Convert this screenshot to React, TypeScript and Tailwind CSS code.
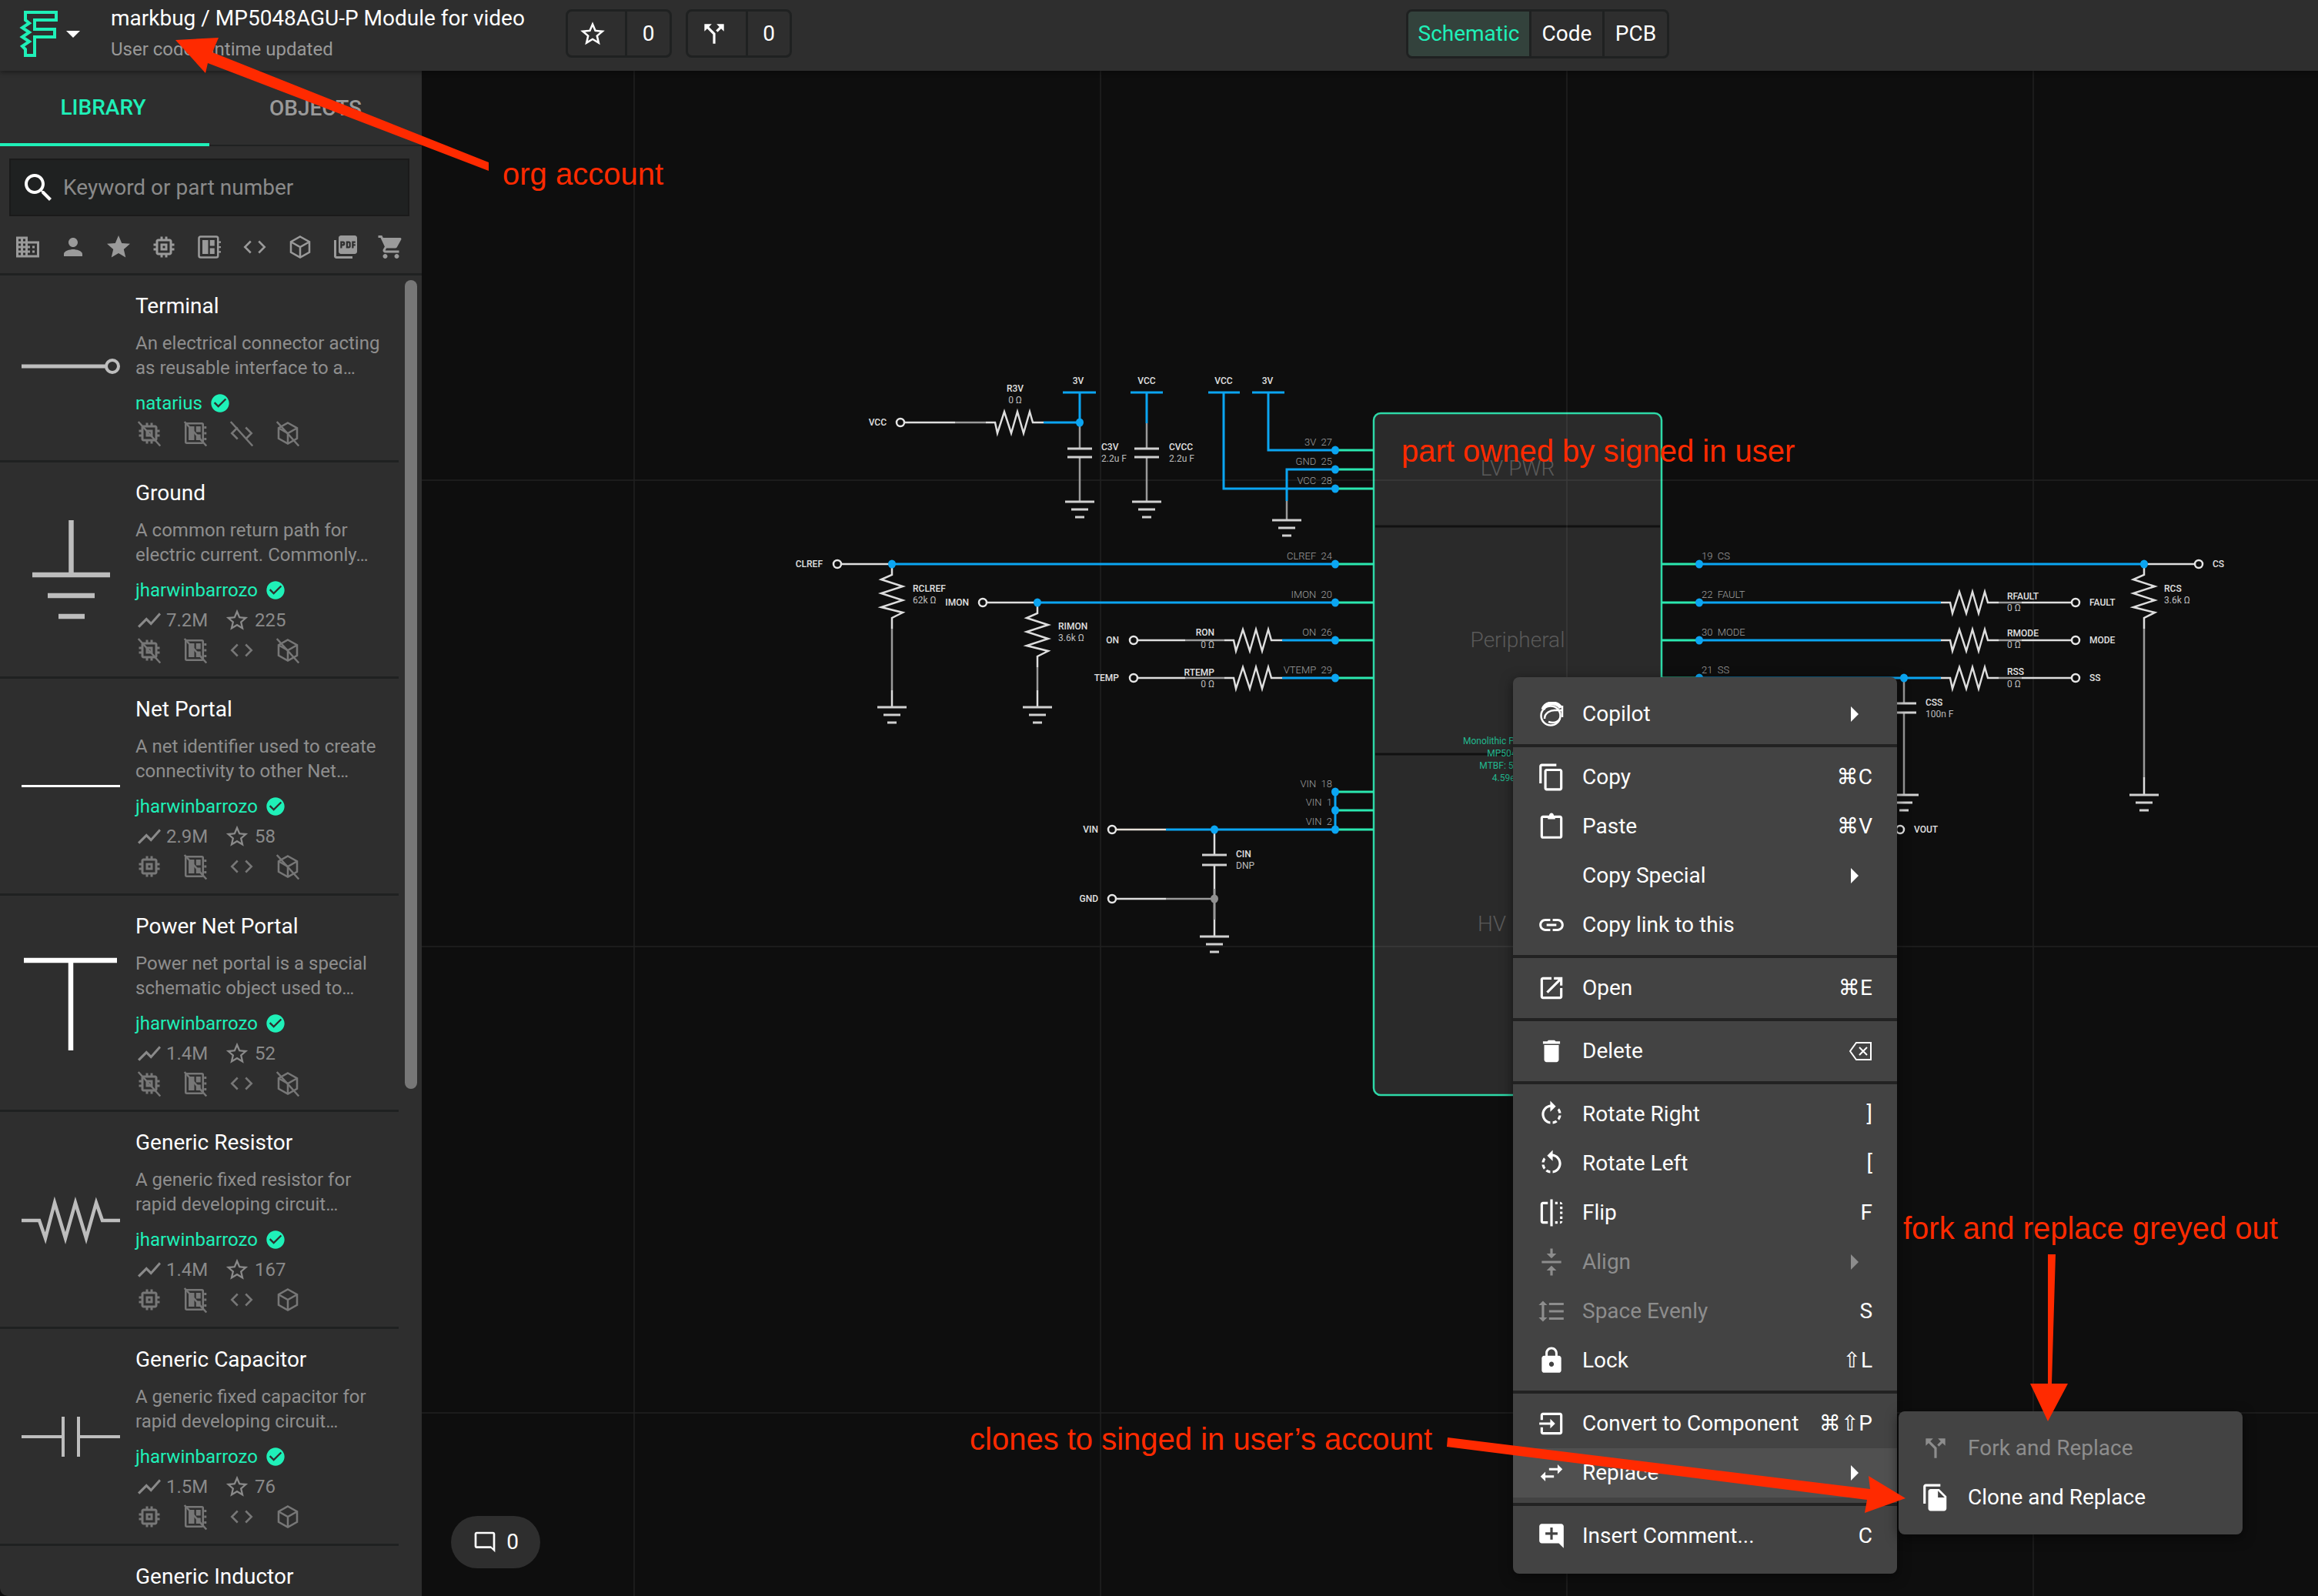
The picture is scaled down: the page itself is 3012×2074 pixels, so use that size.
import React from "react";

const P: Record<string, string> = {
  starO: "M22 9.24l-7.19-.62L12 2 9.19 8.63 2 9.24l5.46 4.73L5.82 21 12 17.27 18.18 21l-1.63-7.03L22 9.24zM12 15.4l-3.76 2.27 1-4.28-3.32-2.88 4.38-.38L12 6.1l1.71 4.04 4.38.38-3.32 2.88 1 4.28L12 15.4z",
  star: "M12 17.27L18.18 21l-1.64-7.03L22 9.24l-7.19-.61L12 2 9.19 8.63 2 9.24l5.46 4.73L5.82 21z",
  person: "M12 12c2.21 0 4-1.79 4-4s-1.79-4-4-4-4 1.79-4 4 1.79 4 4 4zm0 2c-2.67 0-8 1.34-8 4v2h16v-2c0-2.66-5.33-4-8-4z",
  search: "M15.5 14h-.79l-.28-.27C15.41 12.59 16 11.11 16 9.5 16 5.91 13.09 3 9.5 3S3 5.91 3 9.5 5.91 16 9.5 16c1.61 0 3.09-.59 4.23-1.57l.27.28v.79l5 4.99L20.49 19l-4.99-5zm-6 0C7.01 14 5 11.99 5 9.5S7.01 5 9.5 5 14 7.01 14 9.5 11.99 14 9.5 14z",
  domain: "M12 7V3H2v18h20V7H12zM6 19H4v-2h2v2zm0-4H4v-2h2v2zm0-4H4V9h2v2zm0-4H4V5h2v2zm4 12H8v-2h2v2zm0-4H8v-2h2v2zm0-4H8V9h2v2zm0-4H8V5h2v2zm10 12h-8v-2h2v-2h-2v-2h2v-2h-2V9h8v10zm-2-8h-2v2h2v-2zm0 4h-2v2h2v-2z",
  memory: "M15 9H9v6h6V9zm-2 4h-2v-2h2v2zm8-2V9h-2V7c0-1.1-.9-2-2-2h-2V3h-2v2h-2V3H9v2H7c-1.1 0-2 .9-2 2v2H3v2h2v2H3v2h2v2c0 1.1.9 2 2 2h2v2h2v-2h2v2h2v-2h2c1.1 0 2-.9 2-2v-2h2v-2h-2v-2h2zm-4 6H7V7h10v10z",
  pdf: "M20 2H8c-1.1 0-2 .9-2 2v12c0 1.1.9 2 2 2h12c1.1 0 2-.9 2-2V4c0-1.1-.9-2-2-2zm-8.5 7.5c0 .83-.67 1.5-1.5 1.5H9v2H7.5V7H10c.83 0 1.5.67 1.5 1.5v1zm5 2c0 .83-.67 1.5-1.5 1.5h-2.5V7H15c.83 0 1.5.67 1.5 1.5v3zm4-3H19v1h1.5V11H19v2h-1.5V7h3v1.5zM9 9.5h1v-1H9v1zM4 6H2v14c0 1.1.9 2 2 2h14v-2H4V6zm10 5.5h1v-3h-1v3z",
  cart: "M7 18c-1.1 0-1.99.9-1.99 2S5.9 22 7 22s2-.9 2-2-.9-2-2-2zM1 2v2h2l3.6 7.59-1.35 2.45c-.16.28-.25.61-.25.96 0 1.1.9 2 2 2h12v-2H7.42c-.14 0-.25-.11-.25-.25l.03-.12.9-1.63h7.45c.75 0 1.41-.41 1.75-1.03l3.58-6.49c.08-.14.12-.31.12-.48 0-.55-.45-1-1-1H5.21l-.94-2H1zm16 16c-1.1 0-1.99.9-1.99 2s.89 2 1.99 2 2-.9 2-2-.9-2-2-2z",
  fileCopy: "M16 1H4c-1.1 0-2 .9-2 2v14h2V3h12V1zm-1 4l6 6v10c0 1.1-.9 2-2 2H7.99C6.89 23 6 22.1 6 21l.01-14c0-1.1.89-2 1.99-2h7zm-1 7h5.5L14 6.5V12z",
  del: "M6 19c0 1.1.9 2 2 2h8c1.1 0 2-.9 2-2V7H6v12zM19 4h-3.5l-1-1h-5l-1 1H5v2h14V4z",
  lock: "M18 8h-1V6c0-2.76-2.24-5-5-5S7 3.24 7 6v2H6c-1.1 0-2 .9-2 2v10c0 1.1.9 2 2 2h12c1.1 0 2-.9 2-2V10c0-1.1-.9-2-2-2zm-6 9c-1.1 0-2-.9-2-2s.9-2 2-2 2 .9 2 2-.9 2-2 2zm3.1-9H8.9V6c0-1.71 1.39-3.1 3.1-3.1 1.71 0 3.1 1.39 3.1 3.1v2z",
  copy: "M16 1H4c-1.1 0-2 .9-2 2v14h2V3h12V1zm3 4H8c-1.1 0-2 .9-2 2v14c0 1.1.9 2 2 2h11c1.1 0 2-.9 2-2V7c0-1.1-.9-2-2-2zm0 16H8V7h11v14z",
  paste: "M5 3h5c.2-1 .9-2 2-2s1.8 1 2 2h5c1.1 0 2 .9 2 2v15c0 1.1-.9 2-2 2H5c-1.1 0-2-.9-2-2V5c0-1.1.9-2 2-2zm0 2v15h14V5h-4v1H9V5H5z",
  link: "M3.9 12c0-1.71 1.39-3.1 3.1-3.1h4V7H7c-2.76 0-5 2.24-5 5s2.24 5 5 5h4v-1.9H7c-1.71 0-3.1-1.39-3.1-3.1zM8 13h8v-2H8v2zm9-6h-4v1.9h4c1.71 0 3.1 1.39 3.1 3.1s-1.39 3.1-3.1 3.1h-4V17h4c2.76 0 5-2.24 5-5s-2.24-5-5-5z",
  open: "M19 19H5V5h7V3H5c-1.11 0-2 .9-2 2v14c0 1.1.89 2 2 2h14c1.1 0 2-.9 2-2v-7h-2v7zM14 3v2h3.59l-9.83 9.83 1.41 1.41L19 6.41V10h2V3h-7z",
  rotR: "M15.55 5.55L11 1v3.07C7.06 4.56 4 7.92 4 12s3.05 7.44 7 7.93v-2.02c-2.84-.48-5-2.94-5-5.91s2.16-5.43 5-5.91V10l4.55-4.45zM19.93 11c-.17-1.39-.72-2.73-1.62-3.89l-1.42 1.42c.54.75.88 1.6 1.02 2.47h2.02zM13 17.9v2.02c1.39-.17 2.74-.71 3.9-1.61l-1.44-1.44c-.75.54-1.59.89-2.46 1.03zm3.89-2.42l1.42 1.41c.9-1.16 1.45-2.5 1.62-3.89h-2.02c-.14.87-.48 1.72-1.02 2.48z",
  rotL: "M7.11 8.53L5.7 7.11C4.8 8.27 4.24 9.61 4.07 11h2.02c.14-.87.49-1.72 1.02-2.47zM6.09 13H4.07c.17 1.39.72 2.73 1.62 3.89l1.41-1.42c-.52-.75-.87-1.59-1.01-2.47zm1.01 5.32c1.16.9 2.51 1.44 3.9 1.61V17.9c-.87-.15-1.71-.49-2.46-1.03L7.1 18.32zM13 4.07V1L8.45 5.55 13 10V6.09c2.84.48 5 2.94 5 5.91s-2.16 5.43-5 5.91v2.02c3.95-.49 7-3.85 7-7.93s-3.05-7.44-7-7.93z",
  flip: "M15 21h2v-2h-2v2zm4-12h2V7h-2v2zM3 5v14c0 1.1.9 2 2 2h4v-2H5V5h4V3H5c-1.1 0-2 .9-2 2zm16-2v2h2c0-1.1-.9-2-2-2zm-8 20h2V1h-2v22zm8-6h2v-2h-2v2zM15 5h2V3h-2v2zm4 8h2v-2h-2v2zm0 8c1.1 0 2-.9 2-2h-2v2z",
  align: "M8 19h3v4h2v-4h3l-4-4-4 4zm8-14h-3V1h-2v4H8l4 4 4-4zM4 11v2h16v-2H4z",
  space: "M6 7h2.5L5 3.5 1.5 7H4v10H1.5L5 20.5 8.5 17H6V7zm4-2v2h12V5H10zm0 14h12v-2H10v2zm0-6h12v-2H10v2z",
  swap: "M6.99 11L3 15l3.99 4v-3H14v-2H6.99v-3zM21 9l-3.99-4v3H10v2h7.01v3L21 9z",
  comment: "M22 4c0-1.1-.9-2-2-2H4c-1.1 0-2 .9-2 2v12c0 1.1.9 2 2 2h14l4 4V4zm-5 7h-4v4h-2v-4H7V9h4V5h2v4h4v2z",
  input: "M19 3H5c-1.1 0-2 .9-2 2v4h2V5h14v14H5v-4H3v4c0 1.1.9 2 2 2h14c1.1 0 2-.9 2-2V5c0-1.1-.9-2-2-2zM11 16l4-4-4-4v3H2v2h9v3z",
  fork: "M14 4l2.29 2.29-2.88 2.88 1.42 1.42 2.88-2.88L20 10V4zm-4 0H4v6l2.29-2.29 4.71 4.7V20h2v-8.41l-5.29-5.3z",
  bubble: "M4 2h16c1.1 0 2 .9 2 2v18l-4-4H4c-1.1 0-2-.9-2-2V4c0-1.1.9-2 2-2zm0 14h14l2 2V4H4v12z",
  check: "M12 2C6.48 2 2 6.48 2 12s4.48 10 10 10 10-4.48 10-10S17.52 2 12 2zm-2 15l-5-5 1.41-1.41L10 14.17l7.59-7.59L19 8l-9 9z",
  trend: "M3.5 18.49l6-6.01 4 4L22 6.92l-1.41-1.41-7.09 7.97-4-4L2 16.99z",
};

function Ic({ n, c = "w-[38px] h-[38px]" }: { n: string; c?: string }) {
  return (
    <svg viewBox="0 0 24 24" fill="currentColor" className={c + " shrink-0"}>
      <path d={P[n]} />
    </svg>
  );
}

function Glyph({ kind, off }: { kind: string; off?: boolean }) {
  return (
    <svg viewBox="0 0 24 24" fill="none" stroke="currentColor" strokeWidth="1.7" className="w-9 h-9 shrink-0">
      {kind === "chip" && <path fill="currentColor" stroke="none" d={P.memory} />}
      {kind === "pcb" && (
        <>
          <rect x="3.5" y="3.5" width="15" height="17" rx="1" />
          <path fill="currentColor" stroke="none" d="M6 6h5v12H6zM12.500 6h4v5h-4zM12.500 13h4v5h-4zM19.500 6h2v2h-2zM19.500 11h2v2h-2zM19.500 16h2v2h-2z" />
        </>
      )}
      {kind === "code" && <path d="M8.500 7 3.500 12 8.500 17M15.500 7 20.500 12 15.500 17" />}
      {kind === "cube" && <path d="M12 3 20 7.500V16.500L12 21 4 16.500V7.500ZM4 7.500 12 12 20 7.500M12 12V21" />}
      {off && <path d="M2.500 2 21.500 23" />}
    </svg>
  );
}

const rows = [
  { t: "Terminal", d: ["An electrical connector acting", "as reusable interface to a…"], a: "natarius", g: [1, 1, 1, 1] },
  { t: "Ground", d: ["A common return path for", "electric current. Commonly…"], a: "jharwinbarrozo", s: ["7.2M", "225"], g: [1, 1, 0, 1] },
  { t: "Net Portal", d: ["A net identifier used to create", "connectivity to other Net…"], a: "jharwinbarrozo", s: ["2.9M", "58"], g: [0, 1, 0, 1] },
  { t: "Power Net Portal", d: ["Power net portal is a special", "schematic object used to…"], a: "jharwinbarrozo", s: ["1.4M", "52"], g: [1, 1, 0, 1] },
  { t: "Generic Resistor", d: ["A generic fixed resistor for", "rapid developing circuit…"], a: "jharwinbarrozo", s: ["1.4M", "167"], g: [0, 1, 0, 0] },
  { t: "Generic Capacitor", d: ["A generic fixed capacitor for", "rapid developing circuit…"], a: "jharwinbarrozo", s: ["1.5M", "76"], g: [0, 1, 0, 0] },
];

function Sym({ name }: { name: string }) {
  return (
    <svg viewBox="0 0 176 220" className="w-[176px] h-[220px] shrink-0 overflow-visible" fill="none">
      {name === "Terminal" && (
        <>
          <path d="M28 118H137" stroke="#bdbdbd" strokeWidth="5" />
          <circle cx="146" cy="118" r="8" stroke="#bdbdbd" strokeWidth="4" />
        </>
      )}
      {name === "Ground" && (
        <path d="M92.500 75V146M42 146H143M62 173H123M76 200H110" stroke="#bdbdbd" strokeWidth="6.500" />
      )}
      {name === "Net Portal" && <path d="M28 139.500H156" stroke="#fff" strokeWidth="3" />}
      {name === "Power Net Portal" && <path d="M31 84H152M92 84V201" stroke="#fff" strokeWidth="6.500" />}
      {name === "Generic Resistor" && (
        <path d="M28 141H51L59 164 71 118 85 164 98 118 112 164 125 118 133 141H156" stroke="#bdbdbd" strokeWidth="4.500" />
      )}
      {name === "Generic Capacitor" && (
        <path d="M28 140H82M102 140H156M82 114V166M102 114V166" stroke="#bdbdbd" strokeWidth="4" />
      )}
    </svg>
  );
}

function Row({ r }: { r: (typeof rows)[number] }) {
  return (
    <div className="flex mr-[30px] border-b-[3px] border-[#1f2121] pb-[18.6px]">
      <Sym name={r.t} />
      <div className="flex-1 min-w-0 pt-[22px]">
        <div className="h-9 leading-9 text-[28px] text-white whitespace-nowrap">{r.t}</div>
        <div className="mt-[14px] text-2xl leading-8 text-[#8e8e8e] whitespace-nowrap">
          <div>{r.d[0]}</div>
          <div>{r.d[1]}</div>
        </div>
        <div className="mt-[14px] h-8 flex items-center gap-[9px] text-2xl text-[#1ff0b8]">
          <span>{r.a}</span>
          <Ic n="check" c="w-7 h-7" />
        </div>
        {r.s && (
          <div className="mt-[7px] h-8 flex items-center text-2xl text-[#8a8a8a]">
            <Ic n="trend" c="w-9 h-9" />
            <span className="ml-1 w-[75px]">{r.s[0]}</span>
            <Ic n="starO" c="w-[34px] h-[34px]" />
            <span className="ml-[6px]">{r.s[1]}</span>
          </div>
        )}
        <div className="mt-[7px] h-8 flex items-center gap-6 text-[#777777]">
          <Glyph kind="chip" off={!!r.g[0]} />
          <Glyph kind="pcb" off={!!r.g[1]} />
          <Glyph kind="code" off={!!r.g[2]} />
          <Glyph kind="cube" off={!!r.g[3]} />
        </div>
      </div>
    </div>
  );
}

function Sidebar() {
  return (
    <aside className="relative w-[548px] shrink-0 h-full bg-[#2e2e2e] rounded-bl-[10px] overflow-hidden flex flex-col">
      <div className="flex h-[98px] shrink-0 border-b-2 border-[#1f2121] text-[28px] font-medium">
        <div className="w-[272px] h-[98px] pt-[2px] pr-[4px] border-b-4 border-[#1ff0b8] text-[#1ff0b8] flex items-center justify-center">LIBRARY</div>
        <div className="w-[276px] pt-[2px] flex items-center justify-center text-[#9a9a9a]">OBJECTS</div>
      </div>
      <div className="ml-3 w-[520px] mt-4 h-[75px] shrink-0 bg-[#1f2121] border-2 border-[#1a1a1a] flex items-center pl-3 gap-2 text-[28px] text-[#8a8a8a]">
        <Ic n="search" c="w-12 h-12 text-white" />
        <span>Keyword or part number</span>
      </div>
      <div className="h-[77px] pt-[5px] shrink-0 border-b-[3px] border-[#1f2121] flex items-center pl-[18px] gap-[23px] text-[#9a9a9a]">
        <Ic n="domain" c="w-9 h-9" />
        <Ic n="person" c="w-9 h-9" />
        <Ic n="star" c="w-9 h-9" />
        <Ic n="memory" c="w-9 h-9" />
        <svg viewBox="0 0 24 24" fill="none" stroke="currentColor" strokeWidth="1.7" className="w-9 h-9 shrink-0">
          <rect x="3" y="3" width="16.500" height="18" rx="1.500" />
          <path fill="currentColor" stroke="none" d="M6 6h5v12H6zM12.500 6h4v5h-4zM12.500 13h4v5h-4zM20 7h2v1.500h-2zM20 11.250h2v1.500h-2zM20 15.500h2v1.500h-2z" />
        </svg>
        <svg viewBox="0 0 24 24" fill="none" stroke="currentColor" strokeWidth="1.700" className="w-9 h-9 shrink-0"><path d="M8.500 7 3.500 12 8.500 17M15.500 7 20.500 12 15.500 17" /></svg>
        <svg viewBox="0 0 24 24" fill="none" stroke="currentColor" strokeWidth="1.700" className="w-9 h-9 shrink-0"><path d="M12 3 20 7.500V16.500L12 21 4 16.500V7.500ZM4 7.500 12 12 20 7.500M12 12V21" /></svg>
        <Ic n="pdf" c="w-9 h-9" />
        <Ic n="cart" c="w-9 h-9" />
      </div>
      <div className="flex-1 min-h-0 overflow-hidden">
        {rows.map((r) => (
          <Row key={r.t} r={r} />
        ))}
        <div className="pl-[176px] pt-[22px] leading-9 text-[28px] text-white">Generic Inductor</div>
      </div>
      <div className="absolute left-[526px] top-[272px] w-4 h-[1051px] rounded-full bg-[#777777]" />
    </aside>
  );
}

const B = "#0ba5f2", G = "#9a9a9a", W = "#dedede", T = "#2be8b0";

const L = ({ d, c = W, w = 2.5 }: { d: string; c?: string; w?: number }) => (
  <path d={d} stroke={c} strokeWidth={w} fill="none" />
);
const Dot = ({ x, y, c = B }: { x: number; y: number; c?: string }) => <ellipse cx={x} cy={y} rx="5" ry="5.5" fill={c} />;
const Term = ({ x, y }: { x: number; y: number }) => <circle cx={x} cy={y} r="5" fill="none" stroke="#e6e6e6" strokeWidth="2.5" />;
const Gnd = ({ x, y }: { x: number; y: number }) => (
  <L d={`M${x - 19} ${y}H${x + 19}M${x - 11} ${y + 10}H${x + 11}M${x - 6} ${y + 20}H${x + 6}`} c="#d0d0d0" w={3} />
);
const Res = ({ x, y }: { x: number; y: number }) => (
  <L d={`M${x} ${y}h12l3 14 9-28 9 28 8-28 8 28 8-28 4 14h14`} />
);
const RV = ({ x, y }: { x: number; y: number }) => (
  <L d={`M${x} ${y}v14l-14 6 28 9-28 9 28 9-28 9 28 7-14 7v14`} />
);
const Cap = ({ x, y, n = 16 }: { x: number; y: number; n?: number }) => (
  <L d={`M${x - n} ${y}H${x + n}M${x - n} ${y + 11}H${x + n}`} c="#d0d0d0" w={3} />
);
const Txt = ({ x, y, s, k = "v", a = "start" }: { x: number; y: number; s: string; k?: "n" | "v" | "p"; a?: "start" | "end" | "middle" }) => (
  <text
    x={x}
    y={y}
    textAnchor={a}
    dominantBaseline="central"
    fontSize={k === "p" ? 13 : 12}
    fontWeight={k === "n" ? 500 : k === "p" ? 300 : 400}
    fill={k === "n" ? "#e0e0e0" : k === "p" ? "#a0a0a0" : "#bdbdbd"}
    style={{ whiteSpace: "pre" }}
  >
    {s}
  </text>
);

function Schematic() {
  const pins: [number, string][] = [
    [585, "3V  27"], [610, "GND  25"], [635, "VCC  28"], [733, "CLREF  24"], [783, "IMON  20"], [832, "ON  26"], [881, "VTEMP  29"], [1029, "VIN  18"], [1053, "VIN  1"], [1078, "VIN  2"],
  ];
  const rpins: [number, string][] = [[733, "19  CS"], [783, "22  FAULT"], [832, "30  MODE"], [881, "21  SS"]];
  return (
    <svg viewBox="548 92 2464 1982" className="absolute inset-0 w-full h-full">
      <rect x="1785" y="537" width="374" height="886" rx="9" fill="#2a2a2a" stroke="#2ed9a8" strokeWidth="2.5" />
      <L d="M1787 684H2157M1787 980H2157" c="#111" w={3} />
      <g stroke="rgba(255,255,255,0.08)" strokeWidth="1.5">
        <path d="M824 92V2074M1430 92V2074M2036 92V2074M2642 92V2074M548 624H3012M548 1230H3012M548 1836H3012" />
      </g>
      <g fontSize="28" fill="#5a5a5a" textAnchor="middle" fontWeight="300">
        <text x="1972" y="608" dominantBaseline="central">LV PWR</text>
        <text x="1972" y="831" dominantBaseline="central">Peripheral</text>
        <text x="1972" y="1200" dominantBaseline="central">HV PWR</text>
      </g>
      <g fontSize="12" fill="#22b98f" textAnchor="middle">
        <text x="1972" y="947" dominantBaseline="central">IC</text>
        <text x="1972" y="963" dominantBaseline="central">Monolithic Power Systems</text>
        <text x="1972" y="979" dominantBaseline="central">MP5048AGU-P</text>
        <text x="1972" y="995" dominantBaseline="central">MTBF: 57.16 years</text>
        <text x="1972" y="1011" dominantBaseline="central">4.59e-07 FIT</text>
      </g>

      {pins.map(([y, s]) => (
        <g key={s}>
          <L d={`M1735 ${y}H1785`} c={T} w={3} />
          <Txt x={1731} y={y - 11} s={s} k="p" a="end" />
        </g>
      ))}
      {rpins.map(([y, s]) => (
        <g key={s}>
          <L d={`M2159 ${y}H2208`} c={T} w={3} />
          <Txt x={2211} y={y - 11} s={s} k="p" />
        </g>
      ))}

      {/* top left */}
      <Term x={1170} y={549} />
      <L d="M1175 549H1241" /><L d="M1241 549H1281" c={G} />
      <Res x={1281} y={549} />
      <L d="M1356 549H1403" c={B} w={3} />
      <L d="M1381 510H1424M1403 510V549" c={B} w={3} />
      <L d="M1403 549V583M1403 594V652" c={G} />
      <Dot x={1403} y={549} />
      <Cap x={1403} y={583} /><Gnd x={1403} y={652} />
      <Txt x={1152} y={549} s="VCC" k="n" a="end" />
      <Txt x={1401} y={495} s="3V" k="n" a="middle" />
      <Txt x={1319} y={505} s="R3V" k="n" a="middle" />
      <Txt x={1319} y={520} s="0 Ω" a="middle" />
      <Txt x={1431} y={581} s="C3V" k="n" />
      <Txt x={1431} y={596} s="2.2u F" />

      <L d="M1469 510H1511M1490 510V550" c={B} w={3} />
      <L d="M1490 550V583M1490 594V652" c={G} />
      <Cap x={1490} y={583} /><Gnd x={1490} y={652} />
      <Txt x={1490} y={495} s="VCC" k="n" a="middle" />
      <Txt x={1519} y={581} s="CVCC" k="n" />
      <Txt x={1519} y={596} s="2.2u F" />

      <L d="M1570 510H1611M1590 510V635H1735" c={B} w={3} />
      <L d="M1627 510H1669M1648 510V585H1735" c={B} w={3} />
      <L d="M1735 610H1672V651" c={B} w={3} />
      <L d="M1672 651V676" c={G} />
      <Gnd x={1672} y={676} />
      <Txt x={1590} y={495} s="VCC" k="n" a="middle" />
      <Txt x={1647} y={495} s="3V" k="n" a="middle" />
      <Dot x={1735} y={585} /><Dot x={1735} y={610} /><Dot x={1735} y={635} />

      {/* CLREF */}
      <Term x={1088} y={733} />
      <L d="M1093 733H1159" />
      <L d="M1159 733H1735" c={B} w={3} />
      <RV x={1159} y={733} />
      <L d="M1159 817V897" c={G} /><L d="M1159 897V919" />
      <Gnd x={1159} y={919} />
      <Dot x={1159} y={733} /><Dot x={1735} y={733} />
      <Txt x={1069} y={733} s="CLREF" k="n" a="end" />
      <Txt x={1186} y={765} s="RCLREF" k="n" />
      <Txt x={1186} y={780} s="62k Ω" />

      {/* IMON */}
      <Term x={1277} y={783} />
      <L d="M1282 783H1348" />
      <L d="M1348 783H1735" c={B} w={3} />
      <RV x={1348} y={783} />
      <L d="M1348 867V897" c={G} /><L d="M1348 897V919" />
      <Gnd x={1348} y={919} />
      <Dot x={1348} y={783} /><Dot x={1735} y={783} />
      <Txt x={1259} y={783} s="IMON" k="n" a="end" />
      <Txt x={1375} y={814} s="RIMON" k="n" />
      <Txt x={1375} y={829} s="3.6k Ω" />

      {/* ON / TEMP */}
      {[[832, "ON", "RON", 822, 838], [881, "TEMP", "RTEMP", 874, 889]].map(([y, a, b, y1, y2]) => (
        <g key={a as string}>
          <Term x={1473} y={y as number} />
          <L d={`M1478 ${y}H1540`} /><L d={`M1540 ${y}H1591`} c={G} />
          <Res x={1591} y={y as number} />
          <L d={`M1666 ${y}H1735`} c={B} w={3} />
          <Dot x={1735} y={y as number} />
          <Txt x={1454} y={y as number} s={a as string} k="n" a="end" />
          <Txt x={1578} y={y1 as number} s={b as string} k="n" a="end" />
          <Txt x={1578} y={y2 as number} s="0 Ω" a="end" />
        </g>
      ))}

      {/* VIN */}
      <Term x={1445} y={1078} />
      <L d="M1450 1078H1515" c="#e6e0d8" />
      <L d="M1515 1078H1735M1735 1029V1078" c={B} w={3} />
      <L d="M1578 1078V1111M1578 1124V1217" />
      <L d="M1578 1155V1195" c={G} />
      <L d="M1562 1111H1594M1562 1124H1594" c="#d0d0d0" w={3} />
      <Gnd x={1578} y={1217} />
      <Term x={1445} y={1168} />
      <L d="M1450 1168H1515" /><L d="M1515 1168H1578" c={G} />
      <Dot x={1578} y={1078} /><Dot x={1578} y={1168} c="#8f8f8f" />
      <Dot x={1735} y={1029} /><Dot x={1735} y={1053} /><Dot x={1735} y={1078} />
      <Txt x={1427} y={1078} s="VIN" k="n" a="end" />
      <Txt x={1427} y={1168} s="GND" k="n" a="end" />
      <Txt x={1606} y={1110} s="CIN" k="n" />
      <Txt x={1606} y={1125} s="DNP" />

      {/* right side */}
      <L d="M2208 733H2786" c={B} w={3} />
      <L d="M2786 733H2852" />
      <Term x={2857} y={733} />
      <RV x={2786} y={733} />
      <L d="M2786 817V1010" c={G} /><L d="M2786 1010V1033" />
      <Gnd x={2786} y={1033} />
      <Dot x={2208} y={733} /><Dot x={2786} y={733} />
      <Txt x={2875} y={733} s="CS" k="n" />
      <Txt x={2812} y={765} s="RCS" k="n" />
      <Txt x={2812} y={780} s="3.6k Ω" />
      {[[783, "FAULT", "RFAULT", 775, 790], [832, "MODE", "RMODE", 823, 838], [881, "SS", "RSS", 873, 889]].map(([y, a, b, y1, y2]) => (
        <g key={a as string}>
          <L d={`M2208 ${y}H2522`} c={B} w={3} />
          <Res x={2522} y={y as number} />
          <L d={`M2597 ${y}H2627`} c={G} />
          <L d={`M2627 ${y}H2692`} />
          <Term x={2697} y={y as number} />
          <Dot x={2208} y={y as number} />
          <Txt x={2715} y={y as number} s={a as string} k="n" />
          <Txt x={2608} y={y1 as number} s={b as string} k="n" />
          <Txt x={2608} y={y2 as number} s="0 Ω" />
        </g>
      ))}
      <L d="M2474 881V914M2474 926V1033" c={G} />
      <L d="M2458 914H2490M2458 926H2490" c="#d0d0d0" w={3} />
      <Gnd x={2474} y={1033} />
      <Dot x={2474} y={881} />
      <Txt x={2502} y={913} s="CSS" k="n" />
      <Txt x={2502} y={928} s="100n F" />
      <Term x={2469} y={1078} />
      <Txt x={2487} y={1078} s="VOUT" k="n" />
    </svg>
  );
}

function Caret() {
  return (
    <svg viewBox="0 0 10 20" className="w-[10px] h-5 mr-[18px]" fill="currentColor">
      <path d="M0 0 10 10 0 20Z" />
    </svg>
  );
}

function CopilotIcon() {
  return (
    <svg viewBox="0 0 36 32" className="w-9 h-8 shrink-0" fill="none" stroke="currentColor" strokeWidth="2.5">
      <path d="M7 10C9 4 14 2 19 2c5 0 9 2 11 6" strokeWidth="5" />
      <circle cx="17" cy="18" r="12.500" />
      <path d="M9 22c0-8 8-11 13-11h10M32 5v15M14 26c6 2 12 1 15-4" />
    </svg>
  );
}

function BackspaceIcon() {
  return (
    <svg viewBox="0 0 30 26" className="w-[30px] h-[26px]" fill="none" stroke="currentColor" strokeWidth="2">
      <path d="M9 2H28V24H9L1 13ZM13 8 23 18M23 8 13 18" />
    </svg>
  );
}

type Item = { n?: string; l: string; k?: string; arrow?: boolean; dis?: boolean; hot?: boolean; custom?: React.ReactNode; kNode?: React.ReactNode };

function MenuItem({ it }: { it: Item }) {
  return (
    <div className={"h-16 flex items-center pl-[34px] pr-8 " + (it.hot ? "bg-[#505050] " : "") + (it.dis ? "text-[#8d8d8d]" : "text-white")}>
      <div className="w-8 h-8 flex items-center justify-center shrink-0">{it.custom ?? (it.n ? <Ic n={it.n} /> : null)}</div>
      <div className="ml-6 flex-1 whitespace-nowrap">{it.l}</div>
      {it.k && <div className="text-white whitespace-nowrap font-[family-name:Roboto,'DejaVu_Sans',sans-serif]">{it.k}</div>}
      {it.kNode}
      {it.arrow && <Caret />}
    </div>
  );
}

const Sep = () => <div className="h-1 my-[7px] bg-[#222222]" />;

function Menu() {
  return (
    <div className="absolute left-[1966px] top-[880px] w-[499px] h-[1165px] pt-4 bg-[#434343] rounded-lg text-[28px] shadow-[0_4px_16px_rgba(0,0,0,0.5)]">
      <MenuItem it={{ custom: <CopilotIcon />, l: "Copilot", arrow: true }} />
      <Sep />
      <MenuItem it={{ n: "copy", l: "Copy", k: "⌘C" }} />
      <MenuItem it={{ n: "paste", l: "Paste", k: "⌘V" }} />
      <MenuItem it={{ l: "Copy Special", arrow: true }} />
      <MenuItem it={{ n: "link", l: "Copy link to this" }} />
      <Sep />
      <MenuItem it={{ n: "open", l: "Open", k: "⌘E" }} />
      <Sep />
      <MenuItem it={{ n: "del", l: "Delete", kNode: <BackspaceIcon /> }} />
      <Sep />
      <MenuItem it={{ n: "rotR", l: "Rotate Right", k: "]" }} />
      <MenuItem it={{ n: "rotL", l: "Rotate Left", k: "[" }} />
      <MenuItem it={{ n: "flip", l: "Flip", k: "F" }} />
      <MenuItem it={{ n: "align", l: "Align", arrow: true, dis: true }} />
      <MenuItem it={{ n: "space", l: "Space Evenly", k: "S", dis: true }} />
      <MenuItem it={{ n: "lock", l: "Lock", k: "⇧L" }} />
      <Sep />
      <MenuItem it={{ n: "input", l: "Convert to Component", k: "⌘⇧P" }} />
      <MenuItem it={{ n: "swap", l: "Replace", arrow: true, hot: true }} />
      <Sep />
      <MenuItem it={{ n: "comment", l: "Insert Comment...", k: "C" }} />
    </div>
  );
}

function SubMenu() {
  return (
    <div className="absolute left-[2467px] top-[1834px] w-[447px] h-40 pt-4 bg-[#434343] rounded-lg text-[28px] shadow-[0_4px_16px_rgba(0,0,0,0.5)]">
      <div className="h-16 flex items-center pl-[29px] text-[#8d8d8d]">
        <Ic n="fork" />
        <span className="ml-[23px]">Fork and Replace</span>
      </div>
      <div className="h-16 flex items-center pl-[29px] text-white">
        <Ic n="fileCopy" />
        <span className="ml-[23px]">Clone and Replace</span>
      </div>
    </div>
  );
}

function TopBar() {
  return (
    <header className="relative z-10 h-[92px] shrink-0 bg-[#2e2e2e] shadow-[0_2px_6px_rgba(0,0,0,0.4)] flex items-center">
      <div className="w-[144px] shrink-0 h-full flex items-center">
        <svg viewBox="24 10 56 66" className="ml-6 mb-[6px] w-14 h-[66px] shrink-0" fill="none" stroke="#1ff0b8" strokeWidth="4">
          <path d="M33 16H73V26H45V38H71V48H45V72H33V64L29 60 38 54 29 48 38 42 29 36 38 30 33 26Z" />
        </svg>
        <svg viewBox="0 0 18 9" className="ml-[6px] mb-[3px] w-[18px] h-[9px]" fill="#fff"><path d="M0 0H18L9 9Z" /></svg>
      </div>
      <div className="w-[591px] shrink-0 -mt-[6px]">
        <div className="text-[28px] leading-8 text-white whitespace-nowrap">markbug / MP5048AGU-P Module for video</div>
        <div className="mt-[10px] text-2xl leading-7 text-[#999999] whitespace-nowrap">User code runtime updated</div>
      </div>
      <div className="-mt-[5px] w-[138px] h-[63px] shrink-0 rounded-lg border-[3px] border-[#1f2121] flex text-white text-[28px]">
        <div className="w-[77px] pr-[10px] flex items-center justify-center border-r-[3px] border-[#1f2121]"><Ic n="starO" /></div>
        <div className="flex-1 flex items-center justify-center">0</div>
      </div>
      <div className="-mt-[5px] ml-[18px] w-[138px] h-[63px] shrink-0 rounded-lg border-[3px] border-[#1f2121] flex text-white text-[28px]">
        <div className="w-[78px] pr-2 flex items-center justify-center border-r-[3px] border-[#1f2121]"><Ic n="fork" /></div>
        <div className="flex-1 flex items-center justify-center">0</div>
      </div>
      <div className="-mt-[4px] ml-[798px] w-[342px] h-16 shrink-0 rounded-lg border-[3px] border-[#1f2121] overflow-hidden flex text-[28px] text-white">
        <div className="w-[160px] bg-[#33423c] text-[#1ff0b8] flex items-center justify-center border-r-[3px] border-[#1f2121]">Schematic</div>
        <div className="w-[95px] flex items-center justify-center border-r-[3px] border-[#1f2121]">Code</div>
        <div className="flex-1 flex items-center justify-center">PCB</div>
      </div>
    </header>
  );
}

function Annotations() {
  const c = "absolute z-20 text-[40px] leading-[46px] text-[#ff2a00] whitespace-nowrap font-[family-name:'Liberation_Sans',sans-serif]";
  return (
    <>
      <div className={c + " left-[653px] top-[203px]"}>org account</div>
      <div className={c + " left-[1821px] top-[563px]"}>part owned by signed in user</div>
      <div className={c + " left-[2473px] top-[1573px]"}>fork and replace greyed out</div>
      <div className={c + " left-[1260px] top-[1847px]"}>clones to singed in user’s account</div>
      <svg viewBox="0 0 3012 2074" className="absolute z-20 inset-0 w-full h-full pointer-events-none" fill="#ff2a00">
        <path d="M228 52 284 49 276 68 635 211V222L270 82 267 95Z" />
        <path d="M2661 1630H2671L2666 1798H2687L2661 1847 2638 1798H2661Z" />
        <path d="M1881 1868 2430 1935 2428 1918 2476 1947 2423 1966 2426 1949 1880 1880Z" />
      </svg>
    </>
  );
}

export default function App() {
  return (
    <div className="relative w-[3012px] h-[2074px] overflow-hidden bg-[#0e0e0e] flex flex-col font-[family-name:Roboto,sans-serif]">
      <TopBar />
      <div className="flex-1 min-h-0 flex">
        <Sidebar />
        <main className="relative flex-1">
          <Schematic />
          <div className="absolute left-[38px] top-[1878px] w-[116px] h-[68px] rounded-full bg-[#2e2e2e] flex items-center justify-center gap-3 text-[28px] text-white">
            <Ic n="bubble" c="w-8 h-8" />
            <span>0</span>
          </div>
        </main>
      </div>
      <Menu />
      <SubMenu />
      <Annotations />
    </div>
  );
}
